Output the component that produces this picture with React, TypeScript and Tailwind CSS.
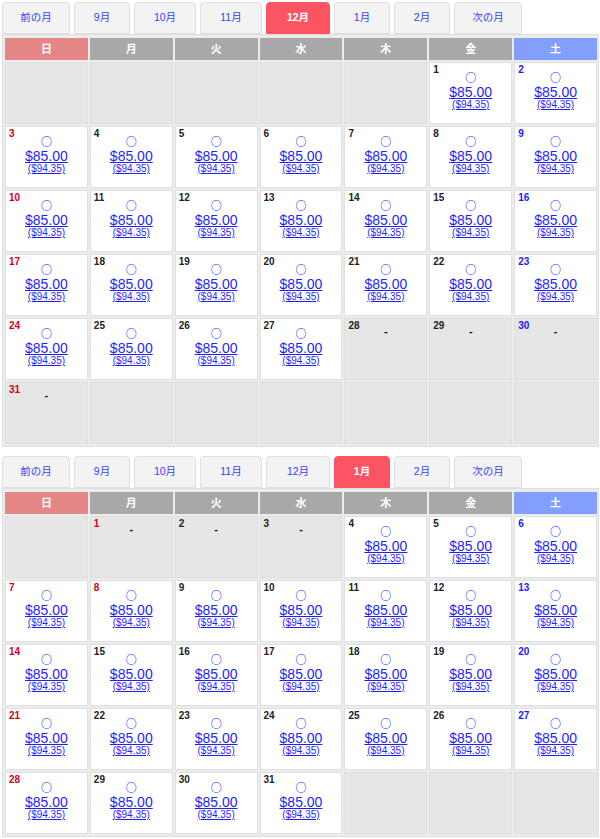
import React from 'react';

type Day = { n: number; state: 'open' | 'closed'; holiday?: boolean } | null;

const TABS = ['前の月', '9月', '10月', '11月', '12月', '1月', '2月', '次の月'];
const TAB_W = ['w-[68px]', 'w-[56px]', 'w-[62px]', 'w-[62px]', 'w-[64px]', 'w-[56px]', 'w-[56px]', 'w-[68px]'];
const WEEK = ['日', '月', '火', '水', '木', '金', '土'];

const headBg = (i: number) =>
    i === 0 ? 'bg-[#e68787]' : i === 6 ? 'bg-[#839ffc]' : 'bg-[#a8a8a8]';

// build one month's grid from the weekday of the 1st
const buildMonth = (firstDow: number, days: number, closed: number[], holidays: number[] = []): Day[] => {
    const cells: Day[] = [];
    for (let i = 0; i < firstDow; i++) cells.push(null);
    for (let d = 1; d <= days; d++) {
        cells.push({ n: d, state: closed.includes(d) ? 'closed' : 'open', holiday: holidays.includes(d) });
    }
    while (cells.length % 7 !== 0) cells.push(null);
    return cells;
};

const Tabs: React.FC<{ active: string }> = ({ active }) => (
    <div className="flex gap-[4px] pl-[2px] pt-[2px]">
        {TABS.map((t, i) => (
            <div
                key={t}
                className={`${TAB_W[i]} h-[32px] rounded-t-[4px] border flex items-center justify-center text-[10.5px] ${
                    t === active
                        ? 'bg-[#fb5463] border-[#fb5463] text-white font-bold'
                        : 'bg-[#f3f3f3] border-[#e0e0e0] text-[#3c3cff]'
                }`}
            >
                {t}
            </div>
        ))}
    </div>
);

const DayCell: React.FC<{ day: Day; col: number }> = ({ day, col }) => {
    if (!day) return <div className="h-[62px] bg-[#e6e6e6] border border-[#e0e0e0]" />;
    const numColor = col === 0 || day.holiday ? 'text-[#d4001a]' : col === 6 ? 'text-[#1a1aff]' : 'text-[#222]';
    if (day.state === 'closed') {
        return (
            <div className="h-[62px] bg-[#e6e6e6] border border-[#e0e0e0] px-[3px] pt-[1px]">
                <div className={`text-[10px] leading-[12px] font-bold ${numColor}`}>{day.n}</div>
                <div className="-mt-[4px] text-center text-[11px] leading-[6px] font-bold text-[#111]">-</div>
            </div>
        );
    }
    return (
        <div className="h-[62px] bg-white border border-[#e0e0e0] px-[3px] pt-[1px]">
            <div className={`text-[10px] leading-[12px] font-bold ${numColor}`}>{day.n}</div>
            <div className="flex flex-col items-center -mt-[5px] text-[#1f1fff]">
                <span className="font-['Noto_Sans_CJK_JP'] font-bold text-[11px] leading-[12px]">○</span>
                <span className="mt-[2px] text-[14px] leading-[14px] underline">$85.00</span>
                <span className="text-[10px] leading-[12px] underline">($94.35)</span>
            </div>
        </div>
    );
};

const Calendar: React.FC<{ active: string; cells: Day[] }> = ({ active, cells }) => (
    <div>
        <Tabs active={active} />
        <div className="ml-[2px] mr-[1px] border border-[#dedede] bg-[#ececec] pl-[2px] pr-[1px] pt-[3px] pb-[2px]">
            <div className="grid grid-cols-7 gap-[2px]">
                {WEEK.map((w, i) => (
                    <div key={w} className={`h-[22px] ${headBg(i)} flex items-center justify-center text-white text-[11px] font-bold`}>
                        {w}
                    </div>
                ))}
                {cells.map((d, i) => (
                    <DayCell key={i} day={d} col={i % 7} />
                ))}
            </div>
        </div>
    </div>
);

export default function App() {
    const dec = buildMonth(5, 31, [28, 29, 30, 31]);
    const jan = buildMonth(1, 31, [1, 2, 3], [1, 8]);
    return (
        <div className="w-[600px] bg-white font-['Liberation_Sans','Noto_Sans_CJK_JP',sans-serif] flex flex-col gap-[7px]">
            <Calendar active="12月" cells={dec} />
            <Calendar active="1月" cells={jan} />
        </div>
    );
}
